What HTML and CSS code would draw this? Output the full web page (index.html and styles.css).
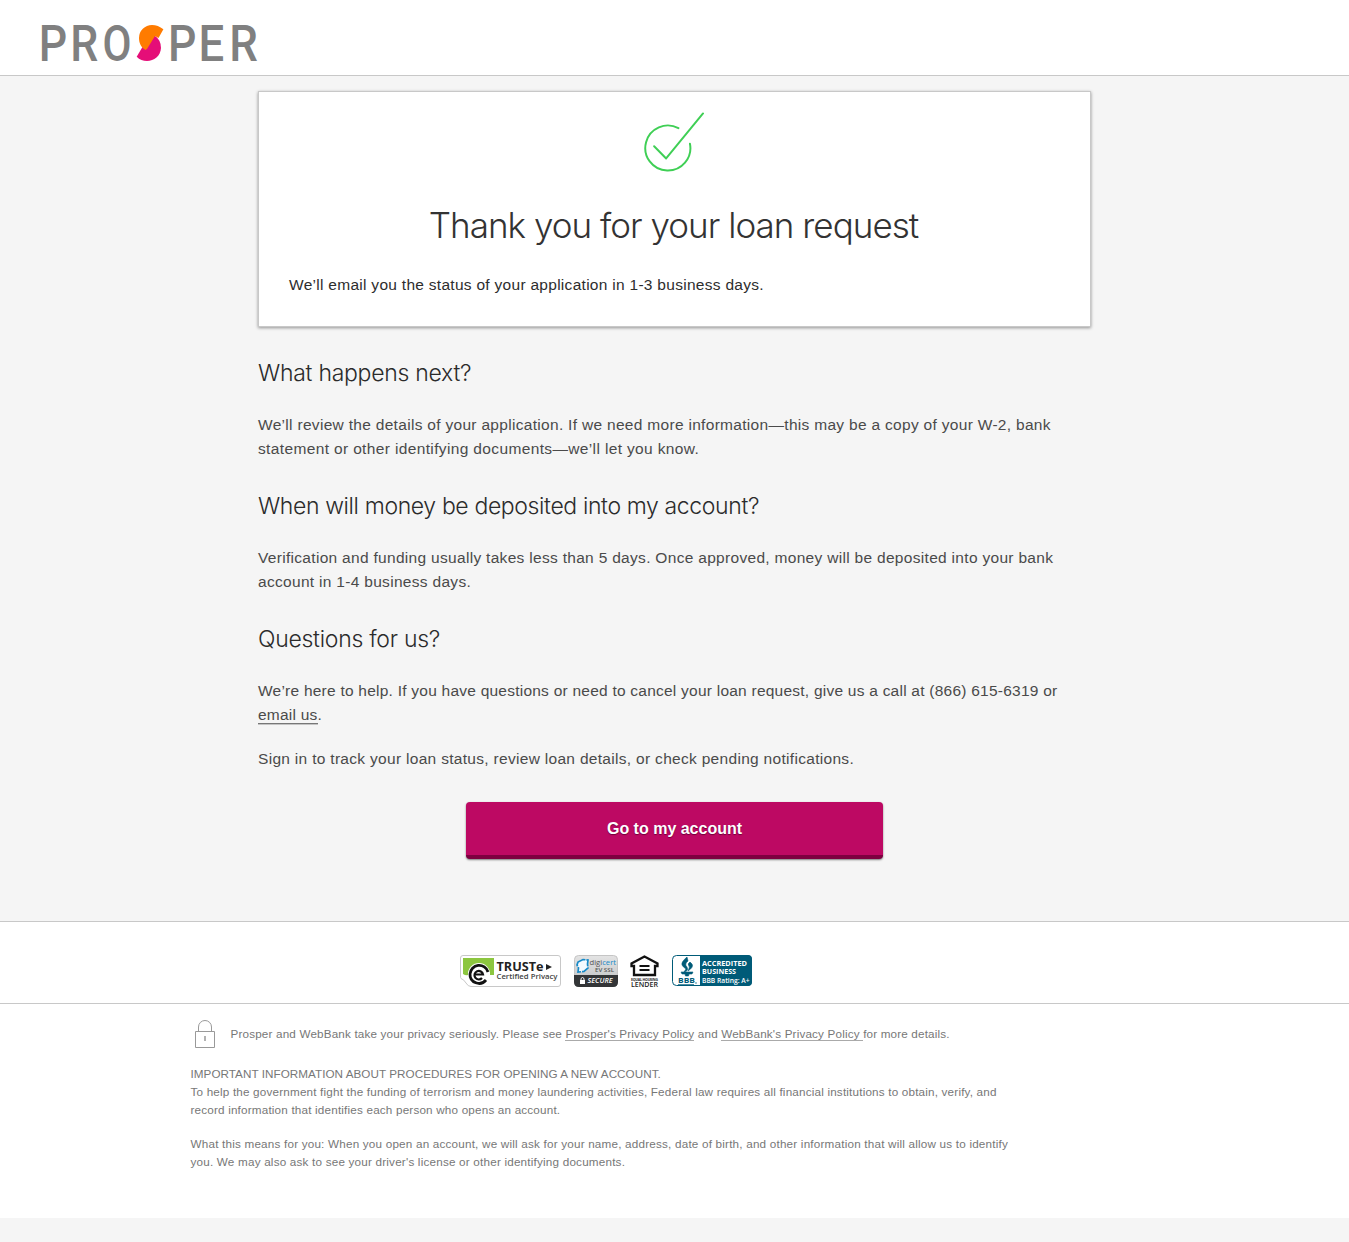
FILE: index.html
```html
<!DOCTYPE html>
<html lang="en">
<head>
<meta charset="utf-8">
<title>Prosper - Loan request</title>
<link rel="stylesheet" href="styles.css">
</head>
<body>
<header class="header">
  <svg class="logo" width="218" height="38" viewBox="0 0 218 38" role="img" aria-label="Prosper">
    <g class="logo-text">
      <text transform="translate(-2.200 36.600) scale(.9 1)">P</text>
      <text transform="translate(29.200 36.600) scale(.9 1)">R</text>
      <text transform="translate(61.500 36.600) scale(.85 1)">O</text>
      <text transform="translate(127 36.600) scale(.9 1)">P</text>
      <text transform="translate(157.600 36.600) scale(.92 1)">E</text>
      <text transform="translate(188.200 36.600) scale(.92 1)">R</text>
    </g>
    <path fill="#e50e78" d="M113.500 11.500A15 15 0 0 1 120 24C119.500 32 113 37 106 37Q100 37 95.700 32.700L101 23.700Z"/>
    <path fill="#ff7b00" d="M122.400 5.300Q117 1 111 1A13 13 0 0 0 98 14C98 19 100 23.500 104.700 26Q106.500 24.500 107.500 22.500L114 12L117.500 14Z"/>
  </svg>
</header>
<main class="main">
  <section class="card">
    <svg class="check" width="62" height="62" viewBox="0 0 62 62" fill="none" stroke="#3fcf55" stroke-width="2" stroke-linecap="round" stroke-linejoin="round">
      <path d="M35 15.900A22.900 22.900 0 1 0 46.700 31.700M10.300 34.300L22.500 46.700L60 1"/>
    </svg>
    <h1 class="title">Thank you for your loan request</h1>
    <p class="status">We’ll email you the status of your application in 1-3 business days.</p>
  </section>
  <section class="answers">
    <h2 class="question">What happens next?</h2>
    <p class="answer">We’ll review the details of your application. If we need more information—this may be a copy of your W-2, bank<br><span class="loose">statement or other identifying documents—we’ll let you know.</span></p>
    <h2 class="question question-long">When will money be deposited into my account?</h2>
    <p class="answer">Verification and funding usually takes less than 5 days. Once approved, money will be deposited into your bank<br>account in 1-4 business days.</p>
    <h2 class="question">Questions for us?</h2>
    <p class="answer help">We’re here to help. If you have questions or need to cancel your loan request, give us a call at (866) 615-6319 or<br><a href="#">email us</a>.</p>
    <p class="answer">Sign in to track your loan status, review loan details, or check pending notifications.</p>
  </section>
  <button class="account-button">Go to my account</button>
</main>
<section class="seals">
  <svg width="102" height="33" viewBox="0 0 102 33" font-family="'Open Sans', sans-serif">
    <path d="M3 .5H98Q100.500 .5 100.500 3V29Q100.500 31.500 98 31.500H11Q8 31.500 6 28Q4 24.500 1 23.500Q.5 23 .5 21V3Q.5 .5 3 .5Z" fill="#fff" stroke="#c8c8c8"/>
    <path d="M3 3H34V20H30A11 11 0 0 0 8 20Q6 21 3 19Z" fill="#8cc63f"/>
    <circle cx="19" cy="19" r="11" fill="#fff"/>
    <path d="M10 19A9.200 9.200 0 0 1 28 17M10 19A9 9 0 0 0 26 25" fill="none" stroke="#111" stroke-width="2.800"/>
    <path d="M14.500 19.500H23A4.300 4.300 0 1 0 22 23" fill="none" stroke="#111" stroke-width="2.200"/>
    <text x="36.500" y="16" font-size="11.500" font-weight="700" textLength="47" lengthAdjust="spacingAndGlyphs" fill="#222">TRUSTe</text>
    <path d="M86 9L92 12L86 15Z" fill="#222"/>
    <text x="36.500" y="24.300" font-size="6.200" font-weight="600" textLength="61" lengthAdjust="spacingAndGlyphs" fill="#444">Certified Privacy</text>
  </svg>
  <svg width="44" height="32" viewBox="0 0 44 32" font-family="'Open Sans', sans-serif">
    <defs>
      <linearGradient id="silver" x1="0" y1="0" x2="0" y2="1"><stop offset="0" stop-color="#e4e4e4"/><stop offset="1" stop-color="#bdc0c2"/></linearGradient>
    </defs>
    <rect x=".5" y=".5" width="43" height="31" rx="4" fill="url(#silver)" stroke="#c5c5c5"/>
    <path d="M0 20H44V27Q44 32 39 32H5Q0 32 0 27Z" fill="#333537"/>
    <path d="M4 7L9 4.500L14 5L13.500 9L14 13L10 16.500L4 17L4.500 13L3 10Z" fill="#f4faff" stroke="#178ac8" stroke-width="1.700" stroke-dasharray="8 1"/>
    <text x="15.500" y="9.800" font-size="7" textLength="26.500" lengthAdjust="spacingAndGlyphs" fill="#555">digi<tspan fill="#178ac8">cert</tspan></text>
    <text x="21" y="17.300" font-size="6" font-weight="600" textLength="19" lengthAdjust="spacingAndGlyphs" fill="#555">EV SSL</text>
    <rect x="6" y="25" width="5" height="4" fill="#fff"/><path d="M7 25V23.500Q8.500 21.500 10 23.500V25" stroke="#fff" fill="none"/>
    <text x="13.500" y="28.300" font-size="6.500" font-weight="600" font-style="italic" textLength="25" lengthAdjust="spacingAndGlyphs" fill="#fff">SECURE</text>
  </svg>
  <svg width="29" height="33" viewBox="0 0 29 33" font-family="'Open Sans', sans-serif">
    <path d="M14.500 1.500L1.500 8.500V11H4V20H25V11H27.500V8.500Z" fill="none" stroke="#111" stroke-width="2.300"/>
    <path d="M9.500 11H19.500M9.500 15H19.500" stroke="#111" stroke-width="2.200"/>
    <text x="1" y="25.800" font-size="3.500" font-weight="700" textLength="27" fill="#222">EQUAL HOUSING</text>
    <text x="1" y="32" font-size="7" font-weight="600" textLength="27" lengthAdjust="spacingAndGlyphs" fill="#222">LENDER</text>
  </svg>
  <svg class="bbb" width="80" height="31" viewBox="0 0 80 31" font-family="'Open Sans', sans-serif">
    <rect x=".5" y=".5" width="79" height="30" rx="4" fill="#fff" stroke="#005b78"/>
    <path d="M28 0H76Q80 0 80 4V27Q80 31 76 31H28Z" fill="#005b78"/>
    <path d="M15 2Q9 7 10 10Q11 12 14 14L12 17Q17 16 15 12Q12 9 16 6ZM18 7Q15 9 17 11Q18 12 16 16Q22 12 20 9ZM9 17H21L20 19H17L16.500 21H13.500L13 19H10Z" fill="#005b78" stroke="#005b78" stroke-width=".6"/>
    <text x="6" y="28.300" font-size="7.500" font-weight="700" textLength="17" lengthAdjust="spacingAndGlyphs" fill="#005b78">BBB</text>
    <path d="M6 29.500H22" stroke="#005b78" stroke-width=".7"/><circle cx="24" cy="28" r=".7" fill="#005b78"/>
    <g fill="#fff" font-weight="700">
      <text x="30" y="10.500" font-size="6.500" textLength="45" lengthAdjust="spacingAndGlyphs">ACCREDITED</text>
      <text x="30" y="18.500" font-size="6.500" textLength="34" lengthAdjust="spacingAndGlyphs">BUSINESS</text>
      <text x="30" y="27.500" font-size="6.200" textLength="47.500" lengthAdjust="spacingAndGlyphs" font-weight="600">BBB Rating: A+</text>
    </g>
  </svg>
</section>
<footer class="legal">
  <div class="privacy">
    <svg width="22" height="30" viewBox="0 0 22 30" fill="none" stroke="#999"><path d="M1.500 12.500H20.500V28.500H1.500ZM4.500 12.500V8A6.500 6.500 0 0 1 17.500 8V12.500"/><path d="M11 17V22" stroke-width="1.500"/></svg>
    <p class="privacy-text">Prosper and WebBank take your privacy seriously. Please see <a href="#">Prosper's Privacy Policy</a> and <a href="#">WebBank's Privacy Policy&nbsp;</a>for more details.</p>
  </div>
  <p class="notice"><span class="notice-title">IMPORTANT INFORMATION ABOUT PROCEDURES FOR OPENING A NEW ACCOUNT.</span><br>To help the government fight the funding of terrorism and money laundering activities, Federal law requires all financial institutions to obtain, verify, and<br>record information that identifies each person who opens an account.</p>
  <p class="notice meaning">What this means for you: When you open an account, we will ask for your name, address, date of birth, and other information that will allow us to identify<br>you. We may also ask to see your driver's license or other identifying documents.</p>
</footer>
</body>
</html>
```
FILE: styles.css
```css
* { box-sizing: border-box; }
body {
  margin: 0;
  background: #f5f5f5;
  color: #4a4a4a;
  font-family: "Liberation Sans", Arial, sans-serif;
  font-size: 15.500px;
  line-height: 24px;
  white-space: nowrap;
}
h1, h2, p { margin: 0; }
a { color: inherit; text-decoration: none; box-shadow: 0 1px #777, 0 2px #c4c4c4; }
.header { height: 76px; padding: 24px 0 0 41px; background: #fff; border-bottom: 1px solid #c8c8c8; }
.logo { display: block; overflow: visible; }
.logo-text { font: 500 49.500px Roboto, sans-serif; fill: #808080; }
.main { width: 833px; height: 845px; margin-left: 258px; padding-top: 15px; }
.card {
  height: 236px;
  padding: 20px 30px 0;
  background: #fff;
  border: 1px solid #c8c8c8;
  box-shadow: 0 1px 3px rgba(0, 0, 0, .4);
  color: #2d2d2d;
}
.check { display: block; margin: 0 auto; padding-right: 1px; }
.title {
  margin: 29px 2px 0 0;
  text-align: center;
  color: #333;
  font: 300 35px/44px Inter, sans-serif;
  letter-spacing: -.97px;
}
.status { margin-top: 26px; letter-spacing: .285px; }
.answers { padding-top: 30px; }
.question { margin-bottom: 24px; color: #2b2b2b; font: 300 23px/32px Inter, sans-serif; letter-spacing: -.27px; }
.question-long { letter-spacing: -.37px; }
.answer { margin-bottom: 29px; letter-spacing: .305px; }
.loose { letter-spacing: .36px; }
.help { margin-bottom: 20px; letter-spacing: .235px; }
.account-button {
  display: block;
  width: 417px;
  height: 57px;
  margin: 31px auto 0;
  padding: 0;
  border: 0;
  border-bottom: 4px solid #7d0040;
  border-radius: 4px;
  background: #bd0963;
  box-shadow: 0 1px 2px rgba(0, 0, 0, .5);
  color: #fff;
  font: bold 16px "Liberation Sans", Arial, sans-serif;
  text-shadow: 0 1px 1px #70003a;
}
.seals {
  display: flex;
  align-items: flex-start;
  gap: 12px;
  height: 83px;
  padding: 33px 0 0 460px;
  background: #fff;
  border-top: 1px solid #c8c8c8;
  border-bottom: 1px solid #c8c8c8;
}
.bbb { margin-left: 1px; }
.legal {
  height: 214px;
  padding: 15px 0 0 190.500px;
  background: #fff;
  color: #777;
  font-size: 11.700px;
  line-height: 18px;
  letter-spacing: .183px;
}
.privacy { display: flex; height: 30px; margin-bottom: 16px; padding-left: 3px; gap: 15px; letter-spacing: .165px; }
.privacy-text { padding-top: 6px; }
.privacy a { box-shadow: 0 1px #aaa; }
.notice { margin-bottom: 16px; }
.notice-title { letter-spacing: .04px; }
.meaning { letter-spacing: .2px; }
```
